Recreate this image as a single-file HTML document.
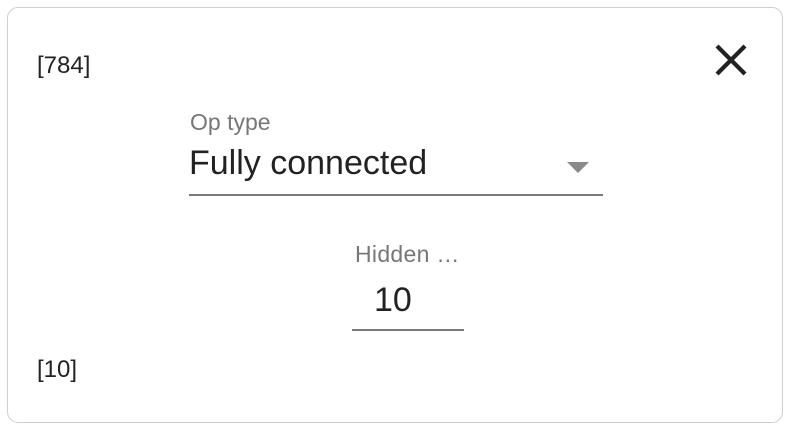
<!DOCTYPE html>
<html><head><style>
html,body{margin:0;padding:0;background:#fff;width:792px;height:432px;overflow:hidden;font-family:"Liberation Sans",sans-serif;}
.card{position:absolute;left:7px;top:7px;width:776px;height:416px;border:1.5px solid #cfcfcf;border-radius:11px;box-sizing:border-box;}
.t{position:absolute;white-space:nowrap;line-height:1;}
</style></head><body>
<div class="card"></div>
<div class="t" style="left:37px;top:54px;font-size:24px;color:#222;">[784]</div>
<div class="t" style="left:37px;top:358px;font-size:24px;color:#222;">[10]</div>
<svg style="position:absolute;left:714px;top:44px" width="34" height="32" viewBox="0 0 34 32"><path d="M3 2L31 30M31 2L3 30" stroke="#222" stroke-width="4.2" fill="none"/></svg>
<div class="t" style="left:190px;top:111px;font-size:23px;color:#777;">Op type</div>
<div class="t" style="left:189px;top:146px;font-size:34px;color:#222;">Fully connected</div>
<svg style="position:absolute;left:567px;top:162px" width="22" height="12"><path d="M0 0H22L11 11Z" fill="#8a8a8a"/></svg>
<div style="position:absolute;left:189px;top:194px;width:414px;height:2px;background:#7a7a7a;"></div>
<div class="t" style="left:355px;top:243px;font-size:23px;color:#777;letter-spacing:0.3px;">Hidden …</div>
<div class="t" style="left:374px;top:283px;font-size:34px;color:#222;">10</div>
<div style="position:absolute;left:352px;top:329px;width:112px;height:2px;background:#7a7a7a;"></div>
</body></html>
